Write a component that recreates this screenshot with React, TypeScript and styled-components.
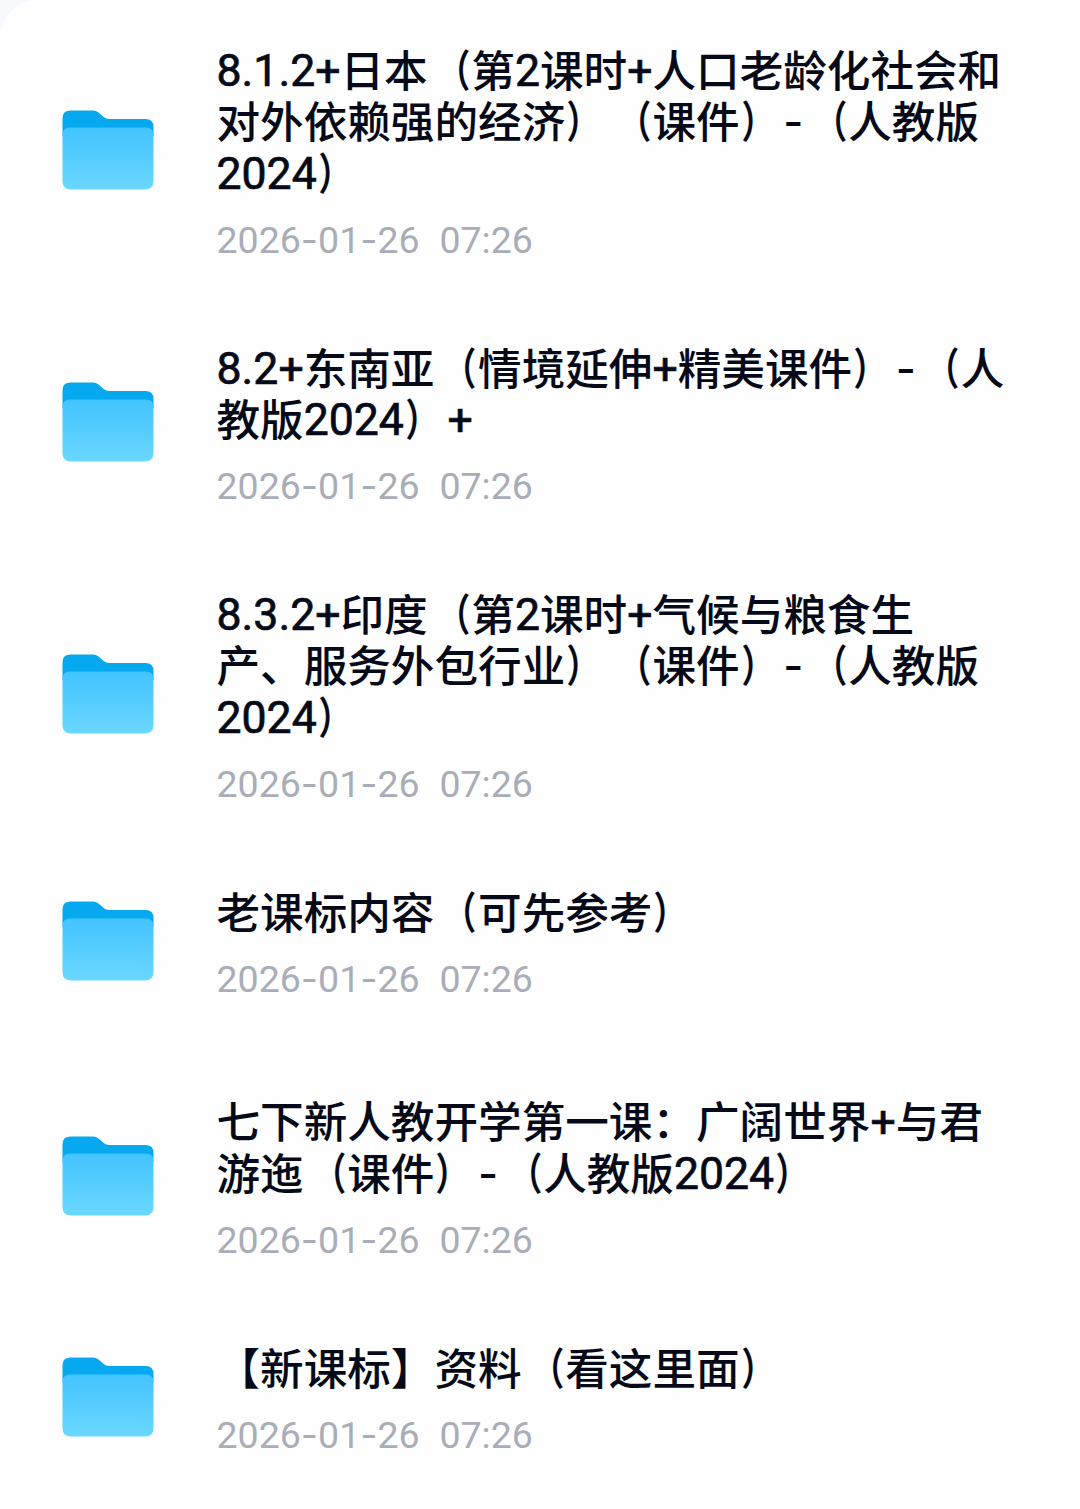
import React from "react";
import styled, { createGlobalStyle } from "styled-components";

const GlobalStyle = createGlobalStyle`
  body {
    margin: 0;
    background: #f7f9fd;
  }
`;

const Panel = styled.main`
  box-sizing: border-box;
  width: 1080px;
  height: 1509px;
  overflow: hidden;
  padding-top: 1.5px;
  background: #fefefe;
  border-top-left-radius: 38px;
  font-family: Roboto, "Noto Sans CJK SC", sans-serif;
  text-spacing-trim: space-all;
  font-kerning: none;
`;

const Row = styled.article<{ $extra?: number }>`
  display: flex;
  align-items: center;
  gap: 62.5px;
  padding: 43px 0 43px 62px;
  margin-bottom: ${(p) => p.$extra ?? 0}px;
`;

const FolderSvg = styled.svg`
  display: block;
  flex: none;
  width: 92px;
  height: 80px;
`;

const Info = styled.div`
  display: flex;
  flex-direction: column;
  padding-top: 2.5px;
`;

const Title = styled.h2`
  margin: 0;
  font-size: 43.6px;
  font-weight: 500;
  line-height: 51.3px;
  color: #060a18;
  white-space: nowrap;
`;

const Line = styled.span`
  display: block;
  height: 51.3px;
`;

const Latin = styled.span`
  font-size: 44.6px;
  font-weight: 400;
  line-height: 1;
  vertical-align: 1px;
  -webkit-text-stroke: 0.7px currentColor;
`;

const Hyphen = styled.span`
  font-family: Inter, sans-serif;
  line-height: 1;
`;

const TitleHyphen = styled(Hyphen)`
  letter-spacing: 1.3px;
  vertical-align: 1px;
`;

const Paren = styled.span<{ $side: "left" | "right" }>`
  display: inline-block;
  line-height: 1;
  font-weight: 700;
  transform: translateX(${(p) => (p.$side === "left" ? 1.5 : -1.5)}px) scaleX(0.75);
  transform-origin: ${(p) => p.$side} center;
`;

const Stamp = styled.time`
  display: block;
  height: 55.3px;
  line-height: 78px;
  font-size: 37.5px;
  color: #a9adb8;
  word-spacing: 0.6px;
  white-space: pre;
`;

function Folder() {
  return (
    <FolderSvg viewBox="0 0 92 80" aria-hidden="true">
      <defs>
        <linearGradient id="folderFront" x1="0" y1="0" x2="0" y2="1">
          <stop offset="0" stopColor="#43c3fe" />
          <stop offset="1" stopColor="#6ad7ff" />
        </linearGradient>
      </defs>
      <path
        d="M.5 8.500Q.5 .5 8.500 .5H31Q34 .5 36.500 2.600L42 7.300Q44 9 47 9H83.500Q91.500 9 91.500 17V26H.5Z"
        fill="#06a8ef"
      />
      <path
        d="M.5 25Q.5 17.500 8 17.500H84Q91.500 17.500 91.500 25V71Q91.500 79.500 83 79.500H9Q.5 79.500 .5 71Z"
        fill="url(#folderFront)"
      />
    </FolderSvg>
  );
}

function renderRun(run: string, key: number) {
  if (run === "-") return <TitleHyphen key={key}>{run}</TitleHyphen>;
  if (run === "（") return <Paren key={key} $side="right">{run}</Paren>;
  if (run === "）") return <Paren key={key} $side="left">{run}</Paren>;
  if (/^[\x20-\x7e]/.test(run)) return <Latin key={key}>{run}</Latin>;
  return run;
}

function TitleLine({ text }: { text: string }) {
  const runs = text.split(/(-|（|）|[0-9.+]+)/).filter(Boolean);
  return <Line>{runs.map(renderRun)}</Line>;
}

interface Item {
  lines: string[];
  time: string;
  extra?: number;
}

const items: Item[] = [
  {
    lines: ["8.1.2+日本（第2课时+人口老龄化社会和", "对外依赖强的经济）（课件）-（人教版", "2024）"],
    time: "2026-01-26  07:26",
  },
  { lines: ["8.2+东南亚（情境延伸+精美课件）-（人", "教版2024）+"], time: "2026-01-26  07:26" },
  {
    lines: ["8.3.2+印度（第2课时+气候与粮食生", "产、服务外包行业）（课件）-（人教版", "2024）"],
    time: "2026-01-26  07:26",
  },
  { lines: ["老课标内容（可先参考）"], time: "2026-01-26  07:26", extra: 14.5 },
  { lines: ["七下新人教开学第一课：广阔世界+与君", "游迤（课件）-（人教版2024）"], time: "2026-01-26  07:26" },
  { lines: ["【新课标】资料（看这里面）"], time: "2026-01-26  07:26" },
];

export default function App() {
  return (
    <>
      <GlobalStyle />
      <Panel>
        {items.map((item) => (
          <Row key={item.lines[0]} $extra={item.extra}>
            <Folder />
            <Info>
              <Title>
                {item.lines.map((line) => (
                  <TitleLine key={line} text={line} />
                ))}
              </Title>
              <Stamp>
                {item.time.split(/(-)/).map((part, i) =>
                  part === "-" ? <Hyphen key={i}>-</Hyphen> : part
                )}
              </Stamp>
            </Info>
          </Row>
        ))}
      </Panel>
    </>
  );
}
